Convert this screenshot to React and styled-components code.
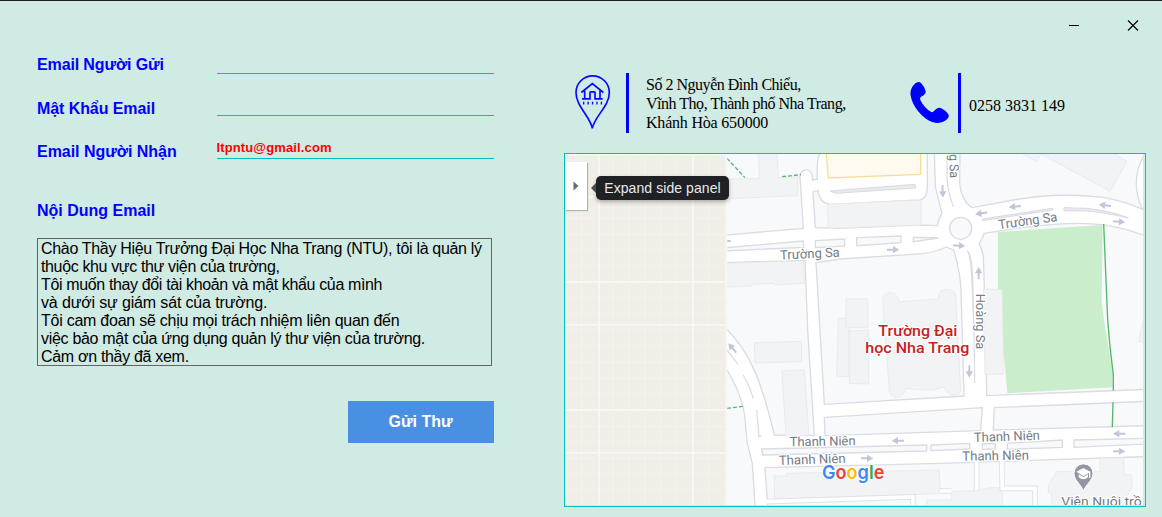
import React from "react";
import styled, { createGlobalStyle } from "styled-components";

const Global = createGlobalStyle`
  * { box-sizing: border-box; }
  body { margin: 0; background: #d0eae4; overflow: hidden; }
`;

const Window = styled.main`
  width: 1162px;
  height: 517px;
  display: flex;
  border-top: 1px solid #231f20;
  background: #d0eae4;
  font-family: "Liberation Sans", Arial, sans-serif;
  color: #000;
`;

const FormPane = styled.section`
  width: 564px;
  padding: 51px 0 0 37px;
  display: flex;
  flex-direction: column;
`;

const Field = styled.div`
  width: 457px;
  height: ${(p) => p.$height}px;
  display: flex;
`;

const Label = styled.label`
  width: 180px;
  flex: none;
  padding-top: 1px;
  color: #0000ff;
  font-size: 16px;
  font-weight: bold;
  line-height: 24px;
  letter-spacing: ${(p) => p.$spacing || 0}px;
  white-space: nowrap;
`;

const LineInput = styled.input`
  width: 277px;
  height: ${(p) => p.$line}px;
  margin: 0;
  padding: 0 0 2px;
  border: 0;
  border-bottom: 1px solid #00bfbf;
  outline: 0;
  background: none;
  color: #ff0000;
  font: bold 13px "Liberation Sans", Arial, sans-serif;
  letter-spacing: 0.13px;
  text-indent: -0.5px;
`;

const Message = styled.div`
  width: 455px;
  height: 128px;
  margin-top: 15px;
  padding: 1px 0 0 3px;
  border: 1px solid #646464;
  overflow: hidden;
  font-size: 16px;
  line-height: 18px;
`;

const MessageLine = styled.div`
  letter-spacing: ${(p) => p.$spacing}px;
  white-space: nowrap;
`;

const SendButton = styled.button`
  width: 146px;
  height: 42px;
  margin: 35px 0 0 311px;
  padding: 0 1px 0 0;
  border: 0;
  background: #4a90e2;
  color: #fff;
  font: bold 16px "Liberation Sans", Arial, sans-serif;
`;

const InfoPane = styled.section`
  width: 582px;
  display: flex;
  flex-direction: column;
`;

const TitleBar = styled.header`
  height: 72px;
  padding: 18px 7px 0 0;
  display: flex;
  justify-content: flex-end;
  align-items: flex-start;
  gap: 47px;
`;

const WindowButton = styled.button`
  width: 12px;
  height: 12px;
  padding: 0;
  border: 0;
  background: none;
  svg { display: block; }
`;

const Contacts = styled.div`
  height: 80px;
  display: flex;
  align-items: flex-start;
  padding-left: 10px;
`;

const IconSlot = styled.div`
  width: ${(p) => p.$width}px;
  padding-top: ${(p) => p.$top || 0}px;
  flex: none;
  svg { display: block; }
`;

const Rule = styled.div`
  width: 3px;
  height: 60px;
  flex: none;
  background: #0000ff;
`;

const ContactText = styled.address`
  width: ${(p) => p.$width}px;
  padding: ${(p) => p.$top}px 0 0 ${(p) => p.$left}px;
  flex: none;
  font: normal 16px/19px "Liberation Serif", "Times New Roman", serif;
  white-space: nowrap;
`;

const ContactLine = styled.div`
  letter-spacing: ${(p) => p.$spacing || 0}px;
`;

const MapFrame = styled.div`
  position: relative;
  width: 582px;
  height: 354px;
  border: 1px solid #00bfbf;
  svg { display: block; }
`;

const ExpandButton = styled.button`
  position: absolute;
  left: 0;
  top: 8px;
  width: 22px;
  height: 48px;
  padding: 0;
  border: 0;
  background: #fff;
  box-shadow: 1px 1px 1px rgba(0, 0, 0, 0.25);
  display: flex;
  align-items: center;
  justify-content: center;
`;

const Tooltip = styled.div`
  position: absolute;
  left: 31px;
  top: 22px;
  width: 133px;
  height: 24px;
  border-radius: 5px;
  background: #202124;
  box-shadow: 0 2px 4px rgba(0, 0, 0, 0.3);
  color: #e8eaed;
  font-size: 14px;
  line-height: 24px;
  letter-spacing: 0.08px;
  text-align: center;
  white-space: nowrap;
  &::before {
    content: "";
    position: absolute;
    left: -5px;
    top: 7px;
    border: solid transparent;
    border-width: 5px 5px 5px 0;
    border-right-color: #4a4b4d;
  }
`;

const blocks = [
  "M490,0H785C771,25 770,40 772,88L757,90V76A18,18 0 0 0 720,80L730,235L490,256Z",
  "M759,125L774,122C778,150 792,162 812,163L1080,150C1097,146 1102,130 1102,110V0H1123L1126,110L1146,190C1136,204 1134,214 1132,227L1070,225L835,235L766,233Z",
  "M490,294L730,273L731,292L490,303Z",
  "M766,272L854,267V288L766,293Z",
  "M890,263L1023,258V278L890,287Z",
  "M1060,262L1128,263L1135,264L1060,275Z",
  "M490,338L735,331L743,540L763,857L643,855C610,720 580,610 490,528Z",
  "M490,642C540,720 553,770 555,810L562,880L577,940L586,1080H490Z",
  "M768,338L840,327L1090,311C1110,308 1140,300 1158,291L1182,301C1198,360 1202,390 1203,420L1212,738L793,763Z",
  "M793,802L1267,773L1262,842L795,857Z",
  "M1303,773L1760,754V827L1300,840Z",
  "M1272,250L1390,232C1560,212 1650,215 1760,259V718L1280,737L1277,540L1270,320C1268,300 1260,290 1258,280C1264,268 1270,262 1272,250Z",
  "M1200,0L1199,100C1201,130 1215,162 1237,173L1360,150C1460,132 1560,134 1630,142C1690,153 1725,165 1760,184V0Z",
  "M605,897L1100,885V903L608,915Z",
  "M1113,885L1229,880V897L1113,902Z",
  "M1267,882L1306,880V897L1267,898Z",
  "M1342,880L1507,870V892L1342,898Z",
  "M1542,870L1760,865V882L1542,892Z",
  "M615,953L1140,940L1760,920V1080H624Z",
];

const buildings = [
  "M595,0H651L655,83L713,80V137L490,147V88L598,85Z",
  "M803,163L1083,150V225L805,235Z",
  "M490,340L730,333L735,400L645,405L642,400L577,403L575,408L490,412Z",
  "M835,505H858V475L868,535V680L830,678Z",
  "M858,447H923V533H858Z",
  "M868,543L926,540V702L868,700Z",
  "M968,455C967,420 1013,418 1017,455L1135,447V440C1135,410 1185,410 1187,440L1202,720C1195,745 1165,740 1150,710C1120,725 1080,720 1040,715C1025,750 990,750 988,720Z",
  "M1270,418H1327L1330,673H1275Z",
  "M583,578L724,574L725,635L585,639Z",
  "M666,663L733,659L747,857L678,858Z",
  "M642,978H680V970L1138,960L1140,1030L1110,1032L644,1047Z",
  "M1175,1024L1250,1022L1290,1013H1327V1080H1100V1050H1175Z",
  "M1465,1005L1490,965H1620V925L1690,923L1692,975H1715V1015L1700,1040V1080H1475V1030L1465,1028Z",
  "M1388,12L1430,34L1443,12L1650,124L1701,35L1640,-4H1388Z",
  "M1760,470L1735,575L1760,577Z",
];

const arrows = [
  [494, 273, 180], [999, 299, 0], [1148, 124, 88], [1264, 190, 172], [1365, 170, 174],
  [1635, 166, 187], [1677, 215, 5], [1197, 287, 3], [1256, 370, -90], [517, 594, 230],
  [1014, 872, 180], [921, 925, 0], [1228, 664, 90], [1678, 851, 180], [1677, 904, 0],
];

const streets = [
  ["Trường Sa", 661, 329, 179, -3],
  ["Trường Sa", 1317, 238, 178, -8],
  ["ng Sa", 1167, -7, 91, 88],
  ["Hoàng Sa", 1248, 431, 167, 90],
  ["Thanh Niên", 689, 889, 198, -1],
  ["Thanh Niên", 657, 945, 200, -2],
  ["Thanh Niên", 1242, 876, 198, -2],
  ["Thanh Niên", 1207, 932, 200, -1],
];

const thinV = [17, 65, 160, 208, 256, 303, 350, 447];
const thinH = [30, 78, 174, 205, 253, 300, 348, 443, 490, 540, 588, 637, 685, 732, 830, 876, 925, 972, 1020];

const StreetText = styled.text`
  font-family: Roboto, sans-serif;
  font-size: 39px;
  fill: #747b85;
  stroke: #fff;
  stroke-width: 7px;
  stroke-linejoin: round;
  paint-order: stroke;
`;

const PlaceText = styled(StreetText)`
  font-size: 45px;
  font-weight: 500;
  fill: #c5221f;
`;

const LogoText = styled(StreetText)`
  font-family: Inter, sans-serif;
  font-size: 58px;
  font-weight: 600;
  stroke-width: 5px;
`;

function StreetMap() {
  return (
    <svg width="578" height="351" viewBox="15 12 1734 1053">
      <rect x="0" y="0" width="1760" height="1080" fill="#fff" />
      <g fill="#f8f9fb" stroke="#dadce2" strokeWidth="4">
        {blocks.map((d) => <path key={d} d={d} />)}
        <circle cx="1202" cy="235" r="33" />
      </g>
      <g fill="#f1f3f4" stroke="#e6e8eb" strokeWidth="2.5">
        {buildings.map((d) => <path key={d} d={d} />)}
      </g>
      <path d="M798,0H1082V73L805,84Z" fill="#fffaf0" stroke="#fbdc97" strokeWidth="4" />
      <path d="M1753,15C1722,65 1722,125 1747,177H1765V0Z" fill="#fff" stroke="#dadce2" strokeWidth="4" />
      <g fill="#e9ebee" stroke="#d8dae0" strokeWidth="3">
        <path d="M811,123L1065,103L1067,114L825,130Z" />
        <path d="M1267,207L1477,175L1478,180L1267,212Z" />
        <path d="M1512,173L1580,175Q1660,184 1705,204Q1630,186 1580,183L1512,182Z" />
        <path d="M1223,302Q1235,315 1238,380L1242,540L1236,410Q1235,330 1223,302Z" />
      </g>
      <g fill="none" stroke="#dcdee4" strokeWidth="4">
        <path d="M1162,12L1161,80Q1162,120 1180,170" />
        <path d="M1242,540L1244,700" />
        <path d="M501,600L535,644M550,675Q570,710 580,746M590,780L597,860L605,858" />
        <path d="M1110,263H1128" />
      </g>
      <g fill="none" stroke="#e0e2e6" strokeWidth="17">
        <path d="M624,1055L1058,1041L1060,1080" />
        <path d="M1250,936V1020M1325,933L1327,1015H1425V1080M1140,1023H1175" />
      </g>
      <g fill="none" stroke="#fff" strokeWidth="11">
        <path d="M620,1055L1058,1041L1060,1080" />
        <path d="M1250,930V1020M1325,928L1327,1015H1425V1080M1140,1023H1175" />
      </g>

      <path d="M1314,246L1628,225L1625,460L1632,510L1658,670V712L1342,730L1330,600L1327,418H1314Z" fill="#caeecb" />
      <g fill="none" stroke="#52b86c" strokeWidth="4">
        <path d="M1631,222L1643,510L1650,590L1660,675V722M1659,757L1657,832" />
        <path d="M501,25L555,83M666,80L723,74M501,775L550,769" strokeDasharray="12 6" />
      </g>

      {arrows.map(([x, y, a]) => (
        <path key={`${x}-${y}`} transform={`translate(${x} ${y}) rotate(${a})`} d="M-18,-3H0V-11L19,0L0,11V3H-18Z" fill="#c1c6dc" />
      ))}

      {streets.map(([name, x, y, length, angle]) => (
        <StreetText key={`${x}-${y}`} textLength={length} lengthAdjust="spacingAndGlyphs" transform={`translate(${x} ${y}) rotate(${angle})`}>
          {name}
        </StreetText>
      ))}
      <PlaceText x="955" y="559" textLength="237" lengthAdjust="spacingAndGlyphs">Trường Đại</PlaceText>
      <PlaceText x="916" y="608" textLength="312" lengthAdjust="spacingAndGlyphs">học Nha Trang</PlaceText>

      <path d="M1570,1024C1564,1003 1542,992 1542,970A28,28 0 0 1 1599,970C1599,992 1577,1003 1570,1024Z" fill="#9298a2" stroke="#fff" strokeWidth="3" />
      <path d="M1549,965L1570,954L1591,965V984H1587V969L1570,978ZM1556,973L1570,981L1584,973V982Q1570,994 1556,982Z" fill="#fff" />
      <StreetText x="1504" y="1067" textLength="241" lengthAdjust="spacingAndGlyphs">Viện Nuôi trồ</StreetText>

      <LogoText x="786" y="987" textLength="187" lengthAdjust="spacingAndGlyphs">
        <tspan fill="#4285f4">G</tspan><tspan fill="#ea4335">o</tspan><tspan fill="#fbbc05">o</tspan><tspan fill="#4285f4">g</tspan><tspan fill="#34a853">l</tspan><tspan fill="#ea4335">e</tspan>
      </LogoText>

      <rect x="0" y="0" width="501" height="1080" fill="#f1eee7" />
      <g stroke="#f4f2ed" strokeWidth="3">
        {thinV.map((x) => <path key={x} d={`M${x},0V1080`} />)}
        {thinH.map((y) => <path key={y} d={`M0,${y}H501`} />)}
      </g>
      <g stroke="#f7f6f2" strokeWidth="6">
        <path d="M117,0V1080M399,0V1080M499,0V1080M0,14H501M0,140H501M0,396H501M0,525H501M0,780H501M0,909H501" />
      </g>
    </svg>
  );
}

function HomePin() {
  return (
    <svg width="37" height="60" viewBox="42 37.5 111 180" fill="none" stroke="#0808ff" strokeWidth="5">
      <path d="M97,204C92,169 48,138 48,96A49.5,49.5 0 0 1 148,96C148,138 102,169 97,204Z" />
      <path d="M64,96L97,69L130,96M74,91V114M120,91V114M66,115H90V96Q90,94 92,94H103Q105,94 105,96V115H128" />
      <path d="M69,128H127" strokeWidth="8" strokeDasharray="4 9.3" />
    </svg>
  );
}

function Phone() {
  return (
    <svg width="42" height="46" viewBox="87 237 126 138">
      <path d="M109,248Q117,243 123,249Q134,260 137,274Q138,280 132,285L122,291Q119,294 121,300C128,316 141,329 154,336Q160,338 164,331L172,325Q178,321 184,325Q198,332 205,343Q209,349 204,355C193,367 177,372 159,367C128,356 97,319 92,287C89,272 96,256 109,248Z" fill="#0000ff" />
    </svg>
  );
}

const message = [
  ["Chào Thầy Hiệu Trưởng Đại Học Nha Trang (NTU), tôi là quản lý", -0.32],
  ["thuộc khu vực thư viện của trường,", -0.36],
  ["Tôi muốn thay đổi tài khoản và mật khẩu của mình", -0.36],
  ["và dưới sự giám sát của trường.", -0.15],
  ["Tôi cam đoan sẽ chịu mọi trách nhiệm liên quan đến", -0.25],
  ["việc bảo mật của ứng dụng quản lý thư viện của trường.", -0.3],
  ["Cảm ơn thầy đã xem.", -0.31],
];

export default function App() {
  return (
    <>
      <Global />
      <Window>
        <FormPane>
          <Field $height={44}>
            <Label htmlFor="sender" $spacing={-0.13}>Email Người Gửi</Label>
            <LineInput id="sender" $line={22} />
          </Field>
          <Field $height={43}>
            <Label htmlFor="password" $spacing={-0.08}>Mật Khẩu Email</Label>
            <LineInput id="password" type="password" $line={20} />
          </Field>
          <Field $height={59}>
            <Label htmlFor="receiver" $spacing={-0.04}>Email Người Nhận</Label>
            <LineInput id="receiver" $line={20} defaultValue="ltpntu@gmail.com" />
          </Field>
          <Label as="div">Nội Dung Email</Label>
          <Message>
            {message.map(([line, spacing]) => (
              <MessageLine key={line} $spacing={spacing}>{line}</MessageLine>
            ))}
          </Message>
          <SendButton>Gửi Thư</SendButton>
        </FormPane>
        <InfoPane>
          <TitleBar>
            <WindowButton aria-label="Minimize">
              <svg width="12" height="12"><path d="M1,6.5H11" stroke="#000" /></svg>
            </WindowButton>
            <WindowButton aria-label="Close">
              <svg width="12" height="12"><path d="M1,1.5L11,11.5M11,1.5L1,11.5" stroke="#000" strokeWidth="1.1" /></svg>
            </WindowButton>
          </TitleBar>
          <Contacts>
            <IconSlot $width={52}><HomePin /></IconSlot>
            <Rule />
            <ContactText $width={280} $left={17} $top={2}>
              <ContactLine $spacing={-0.48}>Số 2 Nguyễn Đình Chiểu,</ContactLine>
              <ContactLine $spacing={-0.48}>Vĩnh Thọ, Thành phố Nha Trang,</ContactLine>
              <ContactLine $spacing={-0.2}>Khánh Hòa 650000</ContactLine>
            </ContactText>
            <IconSlot $width={49} $top={6}><Phone /></IconSlot>
            <Rule />
            <ContactText $width={130} $left={8} $top={23}>0258 3831 149</ContactText>
          </Contacts>
          <MapFrame>
            <StreetMap />
            <ExpandButton aria-label="Expand side panel">
              <svg width="6" height="10" viewBox="0 0 6 10"><path d="M0.5,0.5V9.5L5.5,5Z" fill="#6b6b6b" /></svg>
            </ExpandButton>
            <Tooltip>Expand side panel</Tooltip>
          </MapFrame>
        </InfoPane>
      </Window>
    </>
  );
}
